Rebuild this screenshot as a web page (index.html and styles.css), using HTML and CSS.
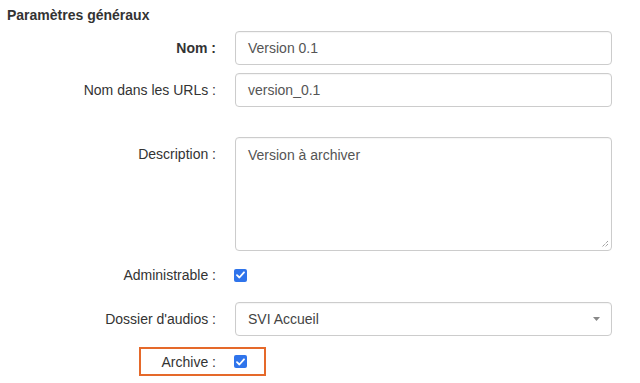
FILE: index.html
```html
<!DOCTYPE html>
<html lang="fr">
<head>
<meta charset="utf-8">
<title>Paramètres généraux</title>
<link rel="stylesheet" href="styles.css">
</head>
<body>
<div class="page">
  <h3 class="title">Paramètres généraux</h3>
  <form class="form">
    <div class="row r-name">
      <label class="lbl bold">Nom :</label>
      <div class="field"><div class="control">Version 0.1</div></div>
    </div>
    <div class="row r-url">
      <label class="lbl">Nom dans les URLs :</label>
      <div class="field"><div class="control">version_0.1</div></div>
    </div>
    <div class="row r-desc">
      <label class="lbl top">Description :</label>
      <div class="field"><div class="control area">Version à archiver<svg class="grip" width="8" height="8" viewBox="0 0 8 8"><path d="M7 1L1 7M7 4L4 7" stroke="#777" stroke-width="1" stroke-dasharray="1 1"/></svg></div></div>
    </div>
    <div class="row r-admin">
      <label class="lbl">Administrable :</label>
      <div class="field"><span class="check"><svg width="9" height="8" viewBox="0 0 9 8"><path d="M1 4.2L3.4 6.5L8 1.3" fill="none" stroke="#fff" stroke-width="1.8" stroke-linecap="round" stroke-linejoin="round"/></svg></span></div>
    </div>
    <div class="row r-folder">
      <label class="lbl">Dossier d'audios :</label>
      <div class="field"><div class="control select"><span>SVI Accueil</span><svg width="7" height="4" viewBox="0 0 7 4"><path d="M0 0H7L3.5 4Z" fill="#888"/></svg></div></div>
    </div>
    <div class="row r-archive">
      <span class="highlight"></span>
      <label class="lbl">Archive :</label>
      <div class="field"><span class="check"><svg width="9" height="8" viewBox="0 0 9 8"><path d="M1 4.2L3.4 6.5L8 1.3" fill="none" stroke="#fff" stroke-width="1.8" stroke-linecap="round" stroke-linejoin="round"/></svg></span></div>
    </div>
  </form>
</div>
</body>
</html>
```
FILE: styles.css
```css
* { box-sizing: border-box; }
html, body { margin: 0; padding: 0; background: #fff; }
body {
  font-family: "Liberation Sans", Arial, Helvetica, sans-serif;
  font-size: 14px;
  line-height: 20px;
  color: #333;
}
.page { width: 640px; height: 383px; overflow: hidden; }
.title {
  margin: 0;
  padding: 5px 0 0 7px;
  font-size: 14px;
  line-height: 20px;
  font-weight: bold;
  color: #333;
}
.form { display: flex; flex-direction: column; }
.row { display: flex; align-items: center; gap: 19px; }
.lbl { width: 216px; text-align: right; flex: none; }
.lbl.bold { font-weight: bold; }
.lbl.top { align-self: flex-start; padding-top: 7px; }
.field { width: 377px; flex: none; }
.control {
  height: 34px;
  border: 1px solid #ccc;
  border-radius: 4px;
  padding: 6px 12px;
  color: #555;
  background: #fff;
  box-shadow: inset 0 1px 1px rgba(0,0,0,0.04);
}
.control.area { height: 114px; position: relative; padding-top: 7px; }
.grip { position: absolute; right: 2px; bottom: 2px; }
.control.select { display: flex; align-items: center; justify-content: space-between; color: #444; padding-right: 11px; }
.check {
  display: flex;
  align-items: center;
  justify-content: center;
  width: 13px;
  height: 13px;
  margin-left: -1px;
  border-radius: 2px;
  background: #2f74eb;
}
.r-name { margin-top: 6px; }
.r-url { margin-top: 8px; }
.r-desc { margin-top: 30px; }
.r-admin { margin-top: 14px; height: 20px; }
.r-folder { margin-top: 17px; }
.r-archive { margin-top: 11px; height: 29px; position: relative; }
.highlight {
  position: absolute;
  left: 139px;
  top: 0;
  width: 127px;
  height: 29px;
  border: 2px solid #e5692a;
}
```
